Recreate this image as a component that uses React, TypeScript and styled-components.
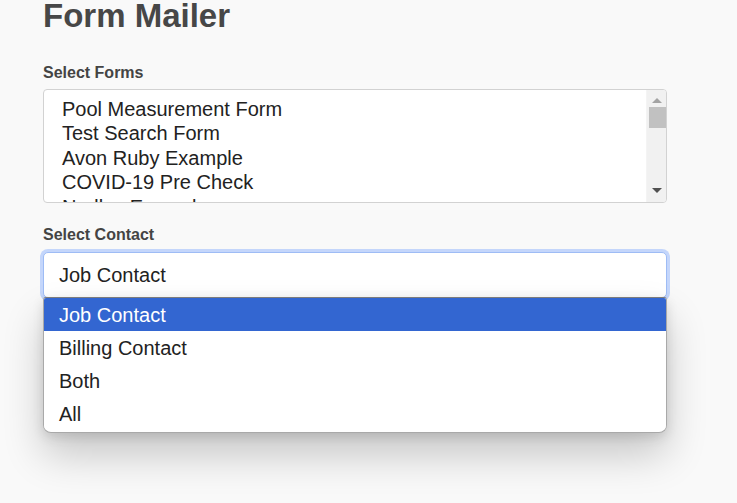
import { FC } from 'react';
import styled, { createGlobalStyle } from 'styled-components';

const Global = createGlobalStyle`
  html {
    overflow: hidden;
  }
  body {
    margin: 0;
    padding: 0;
    min-height: 100vh;
    background: #f9f9f9;
    font-family: "Liberation Sans", Arial, sans-serif;
  }
`;

const Page = styled.main`
  width: 624px;
  padding: 0 0 0 43px;
  color: #444;
`;

const Title = styled.h1`
  margin: -3px 0 0;
  font: 700 33px/38px "Liberation Sans", Arial, sans-serif;
  color: #474747;
`;

const Label = styled.div<{ $top: number }>`
  margin-top: ${(p) => p.$top}px;
  font: 700 16px/18px "Liberation Sans", Arial, sans-serif;
  color: #444;
`;

const ListBox = styled.div`
  margin-top: 7px;
  height: 112px;
  border: 1px solid #d2d2d2;
  border-radius: 4px;
  background: #fff;
  overflow: hidden;
  display: flex;
`;

const ListItems = styled.div`
  flex: 1;
  padding: 7px 0 0 18px;
  font: 400 20px/24.4px "Liberation Sans", Arial, sans-serif;
  color: #222;
`;

const ScrollBar = styled.div`
  width: 19px;
  background: #f1f1f1;
  display: flex;
  flex-direction: column;
  align-items: center;
  border-left: 1px solid #f4f4f4;
`;

const Arrow = styled.div<{ $down?: boolean }>`
  width: 0;
  height: 0;
  margin-top: ${(p) => (p.$down ? 'auto' : '8px')};
  margin-bottom: ${(p) => (p.$down ? '9px' : '4px')};
  border-left: 5px solid transparent;
  border-right: 5px solid transparent;
  ${(p) =>
    p.$down
      ? 'border-top: 5px solid #505050;'
      : 'border-bottom: 5px solid #a3a3a3;'}
`;

const Thumb = styled.div`
  width: 17px;
  height: 21px;
  margin-left: 2px;
  background: #c1c1c1;
`;

const SelectWrap = styled.div`
  position: relative;
  margin-top: 8px;
`;

const SelectBox = styled.div`
  height: 44px;
  border: 1px solid #9ebcf5;
  border-radius: 5px;
  background: #fff;
  box-shadow: 0 0 0 3px #c4d6fb;
  display: flex;
  align-items: center;
  padding-left: 15px;
  font: 400 20px/24px "Liberation Sans", Arial, sans-serif;
  color: #222;
`;

const Menu = styled.ul`
  position: absolute;
  left: 0;
  right: 0;
  top: 45px;
  margin: 0;
  padding: 0 0 2px;
  list-style: none;
  background: #fff;
  border: 1px solid #a9a9a9;
  border-top-color: #7d7d7d;
  border-radius: 3px 3px 8px 8px;
  overflow: hidden;
  box-shadow: 0 22px 40px rgba(0, 0, 0, 0.2), 0 4px 12px rgba(0, 0, 0, 0.12);
  z-index: 2;
`;

const Option = styled.li<{ $active?: boolean }>`
  height: 33px;
  display: flex;
  align-items: center;
  padding-left: 15px;
  font: 400 20px/24px "Liberation Sans", Arial, sans-serif;
  color: ${(p) => (p.$active ? '#fff' : '#222')};
  background: ${(p) => (p.$active ? '#3366d1' : '#fff')};
`;

const SendButton = styled.button`
  margin-top: 34px;
  height: 38px;
  padding: 0 16px;
  border: none;
  border-radius: 4px;
  background: #3366d1;
  color: #fff;
  font: 400 16px "Liberation Sans", Arial, sans-serif;
`;

const forms = [
  'Pool Measurement Form',
  'Test Search Form',
  'Avon Ruby Example',
  'COVID-19 Pre Check',
  'Nudles Example',
];

const contacts = ['Job Contact', 'Billing Contact', 'Both', 'All'];

const App: FC = () => {
  return (
    <>
      <Global />
      <Page>
        <Title>Form Mailer</Title>
        <Label $top={29}>Select Forms</Label>
        <ListBox>
          <ListItems>
            {forms.map((f) => (
              <div key={f}>{f}</div>
            ))}
          </ListItems>
          <ScrollBar>
            <Arrow />
            <Thumb />
            <Arrow $down />
          </ScrollBar>
        </ListBox>
        <Label $top={23}>Select Contact</Label>
        <SelectWrap>
          <SelectBox>Job Contact</SelectBox>
          <Menu>
            {contacts.map((c, i) => (
              <Option key={c} $active={i === 0}>
                {c}
              </Option>
            ))}
          </Menu>
        </SelectWrap>
        <SendButton>Send Mail</SendButton>
      </Page>
    </>
  );
};

export default App;
